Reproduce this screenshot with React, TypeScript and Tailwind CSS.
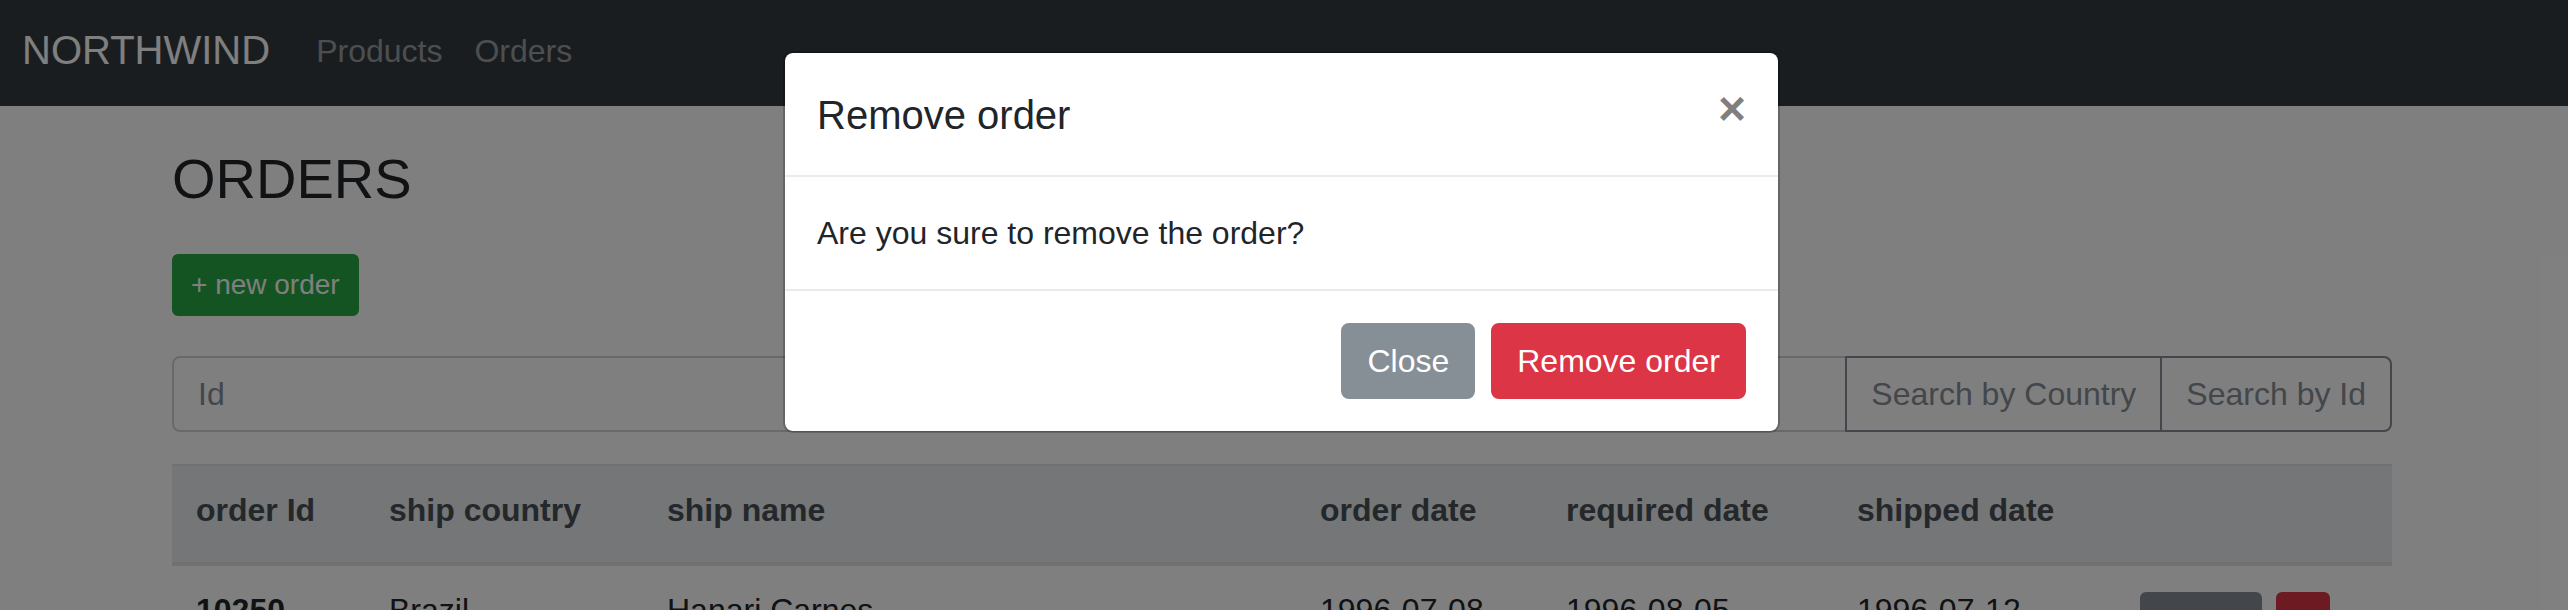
import React from 'react';

const COLUMNS = [
  { key: 'id', label: 'order Id', width: 'w-[193px]' },
  { key: 'country', label: 'ship country', width: 'w-[278px]' },
  { key: 'name', label: 'ship name', width: 'w-[653px]' },
  { key: 'orderDate', label: 'order date', width: 'w-[246px]' },
  { key: 'requiredDate', label: 'required date', width: 'w-[291px]' },
  { key: 'shippedDate', label: 'shipped date', width: 'w-[283px]' },
];

const ORDERS = [
  {
    id: '10250',
    country: 'Brazil',
    name: 'Hanari Carnes',
    orderDate: '1996-07-08',
    requiredDate: '1996-08-05',
    shippedDate: '1996-07-12',
  },
];

function Navbar() {
  return (
    <nav className="flex h-[106px] items-start bg-[#343a40] px-[22px] pt-[20px]">
      <a className="mr-[30px] text-[40px] leading-[60px] text-white">NORTHWIND</a>
      <a className="mt-[7px] px-[16px] text-[32px] leading-[48px] text-white/50">Products</a>
      <a className="mt-[7px] px-[16px] text-[32px] leading-[48px] text-white/50">Orders</a>
    </nav>
  );
}

function OrdersTable() {
  return (
    <div className="mt-[32px] w-[2220px]">
      {/* Header */}
      <div className="flex border-t-2 border-b-4 border-[#dee2e6] bg-[#e9ecef] pt-[20px] pb-[28px] text-[32px] font-bold leading-[48px] text-[#495057]">
        {COLUMNS.map((c) => (
          <div key={c.key} className={`${c.width} shrink-0 pl-[24px]`}>{c.label}</div>
        ))}
        <div className="w-[276px] shrink-0" />
      </div>

      {ORDERS.map((o) => (
        <div key={o.id} className="flex text-[32px] leading-[48px]">
          <div className="w-[193px] shrink-0 pl-[24px] pt-[20px] font-bold">{o.id}</div>
          <div className="w-[278px] shrink-0 pl-[24px] pt-[20px]">{o.country}</div>
          <div className="w-[653px] shrink-0 pl-[24px] pt-[20px]">{o.name}</div>
          <div className="w-[246px] shrink-0 pl-[24px] pt-[20px]">{o.orderDate}</div>
          <div className="w-[291px] shrink-0 pl-[24px] pt-[20px]">{o.requiredDate}</div>
          <div className="w-[283px] shrink-0 pl-[24px] pt-[20px]">{o.shippedDate}</div>
          <div className="flex w-[276px] shrink-0 gap-[14px] pl-[24px] pt-[26px]">
            <button type="button" className="h-[62px] rounded-[6px] border-2 border-[#868e96] bg-[#868e96] px-[16px] text-[28px] leading-[42px] text-white">
              Details
            </button>
            <button type="button" className="h-[62px] rounded-[6px] border-2 border-[#dc3545] bg-[#dc3545] px-[16px] text-[28px] leading-[42px] text-white">
              X
            </button>
          </div>
        </div>
      ))}
    </div>
  );
}

function RemoveOrderModal() {
  return (
    <div className="absolute left-[783px] top-[51px] w-[997px] rounded-[10px] border-2 border-black/20 bg-white bg-clip-padding">
      <div className="flex items-start justify-between border-b-2 border-[#e9ecef] px-[32px] pt-[32px] pb-[30px]">
        <h5 className="text-[40px] leading-[60px] text-[#212529]">Remove order</h5>
        <button type="button" className="text-[48px] font-bold leading-none text-black/50">
          ×
        </button>
      </div>
      <div className="border-b-2 border-[#e9ecef] p-[32px] text-[32px] leading-[48px] text-[#212529]">
        Are you sure to remove the order?
      </div>
      <div className="flex justify-end gap-[16px] p-[32px]">
        <button type="button" className="h-[76px] rounded-[8px] border-2 border-[#868e96] bg-[#868e96] px-[24px] text-[32px] leading-[48px] text-white">
          Close
        </button>
        <button type="button" className="h-[76px] rounded-[8px] border-2 border-[#dc3545] bg-[#dc3545] px-[24px] text-[32px] leading-[48px] text-white">
          Remove order
        </button>
      </div>
    </div>
  );
}

export default function App() {
  return (
    <div className="relative h-[610px] overflow-hidden bg-white font-['Liberation_Sans',Arial,sans-serif] text-[#212529]">
      <Navbar />

      <main className="pl-[172px] pt-[39px]">
        <h3 className="text-[56px] leading-[67px] font-medium">ORDERS</h3>

        <button
          type="button"
          className="mt-[42px] h-[62px] rounded-[6px] border-2 border-[#28a745] bg-[#28a745] px-[17px] text-[28px] leading-[42px] text-white"
        >
          + new order
        </button>

        <div className="mt-[40px] flex h-[76px] w-[2220px]">
          <input
            type="text"
            placeholder="Id"
            className="h-full min-w-0 flex-1 rounded-l-[8px] border-2 border-[#ced4da] px-[24px] text-[32px] text-[#495057] placeholder:text-[#868e96] outline-none"
          />
          <button type="button" className="-ml-[2px] h-full border-2 border-[#868e96] px-[24px] text-[32px] leading-[48px] text-[#868e96]">
            Search by Country
          </button>
          <button type="button" className="-ml-[2px] h-full rounded-r-[8px] border-2 border-[#868e96] px-[24px] text-[32px] leading-[48px] text-[#868e96]">
            Search by Id
          </button>
        </div>

        <OrdersTable />
      </main>

      {/* Backdrop + dialog */}
      <div className="absolute inset-0 bg-black/50" />
      <RemoveOrderModal />
    </div>
  );
}
